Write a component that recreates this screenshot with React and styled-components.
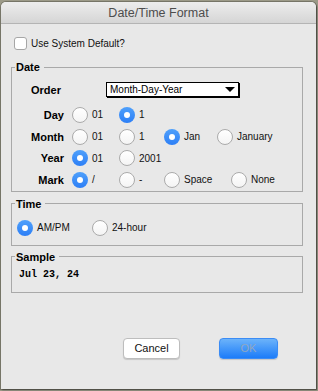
import React from "react";
import styled, { createGlobalStyle } from "styled-components";

const Global = createGlobalStyle`
  html, body { margin: 0; padding: 0; }
  body {
    width: 318px;
    height: 391px;
    overflow: hidden;
    background: #9c9a88;
    padding: 2px 0 0 1px;
    box-sizing: border-box;
    font-family: "Liberation Sans", Arial, sans-serif;
  }
`;

const Window = styled.div`
  width: 315px;
  height: 387px;
  background: #e8e8e8;
  border-radius: 5px 5px 0 0;
  box-shadow: 0 0 0 1px rgba(0, 0, 0, 0.22), 1px 1px 2px rgba(0, 0, 0, 0.45);
  display: flex;
  flex-direction: column;
  overflow: hidden;
`;

const TitleBar = styled.div`
  height: 21px;
  flex: none;
  border-bottom: 1px solid #b4b4b4;
  background: linear-gradient(#ededed, #d5d5d5);
  display: flex;
  align-items: center;
  justify-content: center;
  font-size: 12.5px;
  color: #4d4d4d;
`;

const Content = styled.div`
  padding: 0 13px 0 10px;
  display: flex;
  flex-direction: column;
`;

const CheckRow = styled.label`
  display: flex;
  align-items: center;
  gap: 4px;
  margin: 13px 0 0 3px;
  font-size: 10px;
  color: #111;
  height: 13px;
`;

const Checkbox = styled.span`
  width: 11px;
  height: 11px;
  border: 1px solid #a6a6a6;
  border-radius: 3px;
  background: #fff;
  flex: none;
`;

const Group = styled.fieldset`
  margin: ${(p) => p.$top}px 0 0 0;
  padding: ${(p) => p.$pad};
  border: 1px solid #a9a9a9;
  min-width: 0;
`;

const Legend = styled.legend`
  margin-left: 3px;
  padding: 0 4px 0 1px;
  font-size: 11px;
  font-weight: bold;
  line-height: 14px;
  color: #000;
`;

const OrderRow = styled.div`
  display: flex;
  align-items: center;
  height: 15px;
  padding-left: 19px;
  margin-bottom: 7px;
`;

const OrderLabel = styled.span`
  width: 75px;
  font-size: 11px;
  font-weight: bold;
  color: #000;
`;

const Select = styled.div`
  width: 128px;
  height: 13px;
  border: 1px solid #000;
  box-shadow: 1px 1px 0 #000;
  background: #fff;
  display: flex;
  align-items: center;
  justify-content: space-between;
  padding: 0 0 0 3px;
  font-size: 10px;
  color: #000;
`;

const Arrow = styled.span`
  width: 0;
  height: 0;
  margin-right: 3px;
  border-left: 5px solid transparent;
  border-right: 5px solid transparent;
  border-top: 5px solid #000;
`;

const Row = styled.div`
  display: flex;
  align-items: center;
  height: 21.7px;
`;

const RowLabel = styled.span`
  width: 52px;
  margin-right: 8px;
  text-align: right;
  font-size: 11px;
  font-weight: bold;
  color: #000;
`;

const Option = styled.span`
  display: flex;
  align-items: center;
  gap: 4px;
  width: ${(p) => p.$w}px;
  flex: none;
  font-size: 10px;
  color: #111;
`;

const Radio = styled.span`
  width: 16px;
  height: 16px;
  box-sizing: border-box;
  border-radius: 50%;
  flex: none;
  display: flex;
  align-items: center;
  justify-content: center;
  border: ${(p) => (p.$on ? "none" : "1px solid #ababab")};
  background: ${(p) =>
    p.$on ? "linear-gradient(#4fa0fb, #2d7ff6)" : "linear-gradient(#ffffff, #f4f4f4)"};
  &::after {
    content: "";
    display: ${(p) => (p.$on ? "block" : "none")};
    width: 6px;
    height: 6px;
    border-radius: 50%;
    background: #fff;
  }
`;

const TimeRow = styled.div`
  display: flex;
  align-items: center;
  height: 16px;
  padding-left: 5px;
`;

const SampleText = styled.div`
  font-family: "Liberation Mono", "DejaVu Sans Mono", monospace;
  font-weight: bold;
  font-size: 10px;
  line-height: 12px;
  color: #000;
  padding-left: 7px;
`;

const Buttons = styled.div`
  display: flex;
  justify-content: flex-end;
  gap: 39px;
  margin: 45px 25px 0 0;
`;

const Button = styled.button`
  width: ${(p) => p.$w}px;
  height: 21px;
  border-radius: 4px;
  font-family: "Liberation Sans", Arial, sans-serif;
  font-size: 11px;
  padding: 0;
  border: 1px solid ${(p) => (p.$primary ? "#3b8cf5" : "#bdbdbd")};
  background: ${(p) =>
    p.$primary ? "linear-gradient(#6cb3fa, #1c7cf9)" : "#ffffff"};
  color: ${(p) => (p.$primary ? "#8fa7c2" : "#111")};
  box-shadow: 0 1px 1px rgba(0, 0, 0, 0.15);
`;

const dayOpts = [
  { t: "01", w: 47 },
  { t: "1", w: 45, on: true },
];
const monthOpts = [
  { t: "01", w: 47 },
  { t: "1", w: 45 },
  { t: "Jan", w: 53, on: true },
  { t: "January", w: 60 },
];
const yearOpts = [
  { t: "01", w: 47, on: true },
  { t: "2001", w: 45 },
];
const markOpts = [
  { t: "/", w: 47, on: true },
  { t: "-", w: 45 },
  { t: "Space", w: 67 },
  { t: "None", w: 50 },
];

function OptRow({ label, opts }) {
  return (
    <Row>
      <RowLabel>{label}</RowLabel>
      {opts.map((o) => (
        <Option key={o.t} $w={o.w}>
          <Radio $on={o.on} />
          {o.t}
        </Option>
      ))}
    </Row>
  );
}

export default function App() {
  return (
    <>
      <Global />
      <Window>
        <TitleBar>Date/Time Format</TitleBar>
        <Content>
          <CheckRow>
            <Checkbox />
            Use System Default?
          </CheckRow>
          <Group $top={10} $pad="8px 0 0 0">
            <Legend>Date</Legend>
            <OrderRow>
              <OrderLabel>Order</OrderLabel>
              <Select>
                Month-Day-Year
                <Arrow />
              </Select>
            </OrderRow>
            <OptRow label="Day" opts={dayOpts} />
            <OptRow label="Month" opts={monthOpts} />
            <OptRow label="Year" opts={yearOpts} />
            <OptRow label="Mark" opts={markOpts} />
          </Group>
          <Group $top={5} $pad="9px 0 9px 0">
            <Legend>Time</Legend>
            <TimeRow>
              <Option $w={75}>
                <Radio $on />
                AM/PM
              </Option>
              <Option $w={60}>
                <Radio />
                24-hour
              </Option>
            </TimeRow>
          </Group>
          <Group $top={4} $pad="5px 0 11px 0">
            <Legend>Sample</Legend>
            <SampleText>Jul 23, 24</SampleText>
          </Group>
          <Buttons>
            <Button $w={57}>Cancel</Button>
            <Button $w={59} $primary>
              OK
            </Button>
          </Buttons>
        </Content>
      </Window>
    </>
  );
}
